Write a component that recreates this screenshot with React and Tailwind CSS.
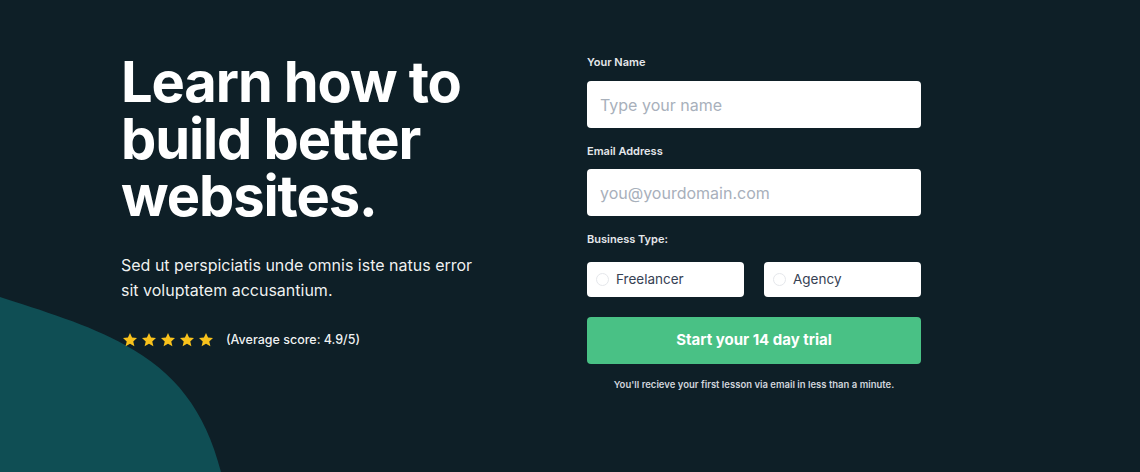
import React from "react";

function Star() {
  return (
    <svg width="16" height="16" viewBox="0 0 24 24" className="shrink-0">
      <path d="M12 1.5l3.1 6.9 7.4.7-5.6 5 1.7 7.4L12 17.6l-6.6 3.9 1.7-7.4-5.6-5 7.4-.7z" fill="#f8c21c" />
    </svg>
  );
}

export default function App() {
  return (
    <div className="relative w-[1140px] h-[472px] overflow-hidden bg-[#0e1f27]" style={{ fontFamily: "Inter, 'Noto Sans', sans-serif" }}>
      <svg className="absolute left-0 top-0" width="1140" height="472" viewBox="0 0 1140 472">
        <path d="M0 297 C 40 310, 90 325, 125 345 C 175 372, 205 410, 221 472 L 0 472 Z" fill="#0f4e54" />
      </svg>
      <div className="relative flex pl-[121px] pt-[49px]">
        <div className="w-[466px] flex flex-col pt-[5px]">
          <h1 className="text-[56px] leading-[57px] font-bold text-white tracking-[-1.1px]">
            Learn how to<br />build better<br />websites.
          </h1>
          <p className="mt-[28px] text-[16px] leading-[25px] text-white/95">
            Sed ut perspiciatis unde omnis iste natus error<br />sit voluptatem accusantium.
          </p>
          <div className="mt-[28px] flex items-center">
            <div className="flex gap-[3px] pl-[1px]">
              <Star /><Star /><Star /><Star /><Star />
            </div>
            <span className="ml-[12px] text-[12.5px] font-medium text-white/95">(Average score: 4.9/5)</span>
          </div>
        </div>
        <div className="w-[334px] flex flex-col -mt-[3px]">
          <label className="text-[11px] font-semibold text-gray-200 leading-[14px] mt-[9px]">Your Name</label>
          <div className="mt-[12px] h-[47px] rounded-[4px] bg-white flex items-center px-[13px] text-[16px] text-[#a8b0bb]">Type your name</div>
          <label className="text-[11px] font-semibold text-gray-200 leading-[14px] mt-[16px]">Email Address</label>
          <div className="mt-[11px] h-[47px] rounded-[4px] bg-white flex items-center px-[13px] text-[16px] text-[#a8b0bb]">you@yourdomain.com</div>
          <label className="text-[11px] font-semibold text-gray-200 leading-[14px] mt-[16px]">Business Type:</label>
          <div className="mt-[16px] flex gap-[20px]">
            <div className="flex-1 h-[35px] rounded-[4px] bg-white flex items-center px-[9px] gap-[7px]">
              <span className="w-[13px] h-[13px] rounded-full border border-gray-200" />
              <span className="text-[13.5px] text-gray-700">Freelancer</span>
            </div>
            <div className="flex-1 h-[35px] rounded-[4px] bg-white flex items-center px-[9px] gap-[7px]">
              <span className="w-[13px] h-[13px] rounded-full border border-gray-200" />
              <span className="text-[13.5px] text-gray-700">Agency</span>
            </div>
          </div>
          <div className="mt-[20px] h-[47px] rounded-[4px] bg-[#49c185] flex items-center justify-center text-[15px] font-bold text-white">Start your 14 day trial</div>
          <p className="mt-[14px] text-center text-[9.5px] font-semibold text-gray-300">You'll recieve your first lesson via email in less than a minute.</p>
        </div>
      </div>
    </div>
  );
}
